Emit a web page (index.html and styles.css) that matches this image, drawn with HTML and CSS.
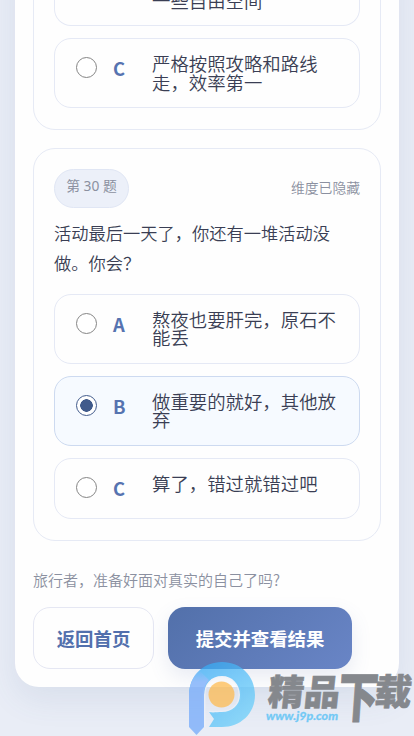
FILE: index.html
```html
<!DOCTYPE html>
<html lang="zh-CN">
<head>
<meta charset="utf-8">
<meta name="viewport" content="width=device-width, initial-scale=1">
<title>测试</title>
<link rel="stylesheet" href="styles.css">
</head>
<body>
<main class="shell">
  <section class="card">
    <div class="option tail"><span class="text">一些自由空间</span></div>
    <div class="option"><span class="radio"></span><b class="key">C</b><span class="text">严格按照攻略和路线走，效率第一</span></div>
  </section>
  <section class="card current">
    <header class="meta"><span class="pill">第 30 题</span><span class="dimension">维度已隐藏</span></header>
    <p class="question">活动最后一天了，你还有一堆活动没做。你会？</p>
    <div class="option"><span class="radio"></span><b class="key">A</b><span class="text">熬夜也要肝完，原石不能丢</span></div>
    <div class="option selected"><span class="radio"></span><b class="key">B</b><span class="text">做重要的就好，其他放弃</span></div>
    <div class="option single"><span class="radio"></span><b class="key">C</b><span class="text">算了，错过就错过吧</span></div>
  </section>
  <p class="hint">旅行者，准备好面对真实的自己了吗?</p>
  <footer class="actions">
    <button class="btn">返回首页</button>
    <button class="btn primary">提交并查看结果</button>
  </footer>
</main>
<svg class="watermark" width="230" height="80" viewBox="184 656 230 80">
  <defs>
    <linearGradient id="ring" x1="0" y1="0" x2="1" y2="1"><stop offset="0" stop-color="#2ea5f5"/><stop offset="1" stop-color="#70d4fb"/></linearGradient>
    <linearGradient id="stem" x1="0" y1="0" x2="0" y2="1"><stop offset="0" stop-color="#70a8fb" stop-opacity="0"/><stop offset=".4" stop-color="#70a8fb"/></linearGradient>
  </defs>
  <path class="halo" d="M204 727V695C204 684 211 676 222 676C232 676 240 684 240 695C240 705 232 712 222 712C217 712 213 713 209 712"/>
  <g opacity=".72">
    <path fill="url(#ring)" d="M189 695C189 676 203 662 222 662C241 662 255 676 255 695C255 714 240 727 222 727H209L214 719L209 712C213 713 217 712 222 712C232 712 240 705 240 695C240 684 232 676 222 676C211 676 204 684 204 695V700H189Z"/>
    <path fill="#70a8fb" d="M189 700H204V727L196.500 735L189 727Z"/>
    <path fill="url(#stem)" d="M189 695C189 686 193 676 199 670L209 680Q204 685 204 695V700H189Z"/>
    <circle cx="221.500" cy="694.500" r="13" fill="#ffba4c"/>
  </g>
  <g class="brand">
    <text transform="translate(267 704.500) skewX(-6) scale(1 .96)" textLength="72" lengthAdjust="spacingAndGlyphs">精品</text>
    <text transform="translate(337 717) skewX(-4) scale(1.080 1.460)">下</text>
    <text transform="translate(373.500 705) skewX(-6) scale(1 .98)">载</text>
  </g>
  <text class="site" x="266" y="720" textLength="72" lengthAdjust="spacingAndGlyphs">www.j9p.com</text>
</svg>
</body>
</html>
```
FILE: styles.css
```css
* { box-sizing: border-box; }
body {
  margin: 0;
  height: 736px;
  overflow: hidden;
  display: flex;
  flex-direction: column;
  justify-content: flex-end;
  padding: 0 15px 49px;
  background: #e9edf6;
  color: #3a3e54;
  font-family: "Noto Sans CJK SC", sans-serif;
  font-weight: 350;
}
.shell {
  flex: none;
  padding: 18px;
  background: #fefefe;
  border-radius: 24px;
  box-shadow: 0 12px 32px rgba(70, 95, 145, .1);
}
.card {
  padding: 20px;
  border: 1px solid #e6eaf5;
  border-radius: 22px;
  margin-bottom: 19px;
}
.card:first-child { padding-bottom: 21px; margin-bottom: 18px; }
.current { padding-bottom: 21px; }
.meta { display: flex; justify-content: space-between; height: 39px; }
.pill {
  width: 75px;
  border: 1px solid #e0e6f4;
  border-radius: 20px;
  background: #ecf0f9;
  color: #8b90a0;
  font: 400 13.8px/31px "Noto Sans", "Noto Sans CJK SC", sans-serif;
  text-align: center;
}
.dimension { color: #8b90a0; font-size: 13.8px; line-height: 36px; }
.question { margin: 10px 0 17px; font-size: 17.25px; line-height: 29.3px; }
.option {
  display: grid;
  grid-template-columns: 21px 23px 1fr;
  column-gap: 16px;
  align-items: start;
  height: 70px;
  padding: 15px 21px;
  border: 1px solid #e5e9f5;
  border-radius: 17px;
}
.option + .option { margin-top: 12px; }
.tail { height: 40px; padding-top: 5px; border-top: 0; border-radius: 0 0 17px 17px; }
.tail .text { grid-column: 3; }
.single { height: 61px; }
.selected { background: #f6faff; border-color: #cddaf0; }
.radio {
  width: 21px;
  height: 21px;
  margin-top: 3px;
  border: 1.500px solid #858585;
  border-radius: 50%;
  background: #fff;
}
.selected .radio {
  border-color: #425b8c;
  background: radial-gradient(circle, #405a8b 0 6px, #fff 6.500px);
}
.key { color: #5673b0; font-size: 18.4px; line-height: 29px; font-weight: 700; }
.text { font-size: 18.4px; line-height: 18.4px; margin-right: -6px; }
.hint { margin: 0 0 16px; color: #8b90a0; font-size: 15px; line-height: 22px; }
.card + .hint { margin-top: 28px; }
.actions { display: flex; gap: 14px; }
.btn {
  width: 121px;
  height: 62px;
  padding: 0;
  border: 1px solid #e5e7f3;
  border-radius: 17px;
  background: #fefefe;
  color: #5270ad;
  font: 700 18.4px "Noto Sans CJK SC", sans-serif;
}
.primary {
  width: 184px;
  border: 0;
  background: linear-gradient(135deg, #5270aa, #6985c6);
  color: #fff;
  box-shadow: 0 8px 20px rgba(82, 112, 170, .13);
}
.watermark { position: absolute; right: 0; bottom: 0; }
.halo { fill: none; stroke: #eef1f8; stroke-width: 3px; opacity: .6; }
.brand {
  fill: #85888d;
  stroke: #85888d;
  stroke-width: .6px;
  font: 900 37px "Noto Sans CJK SC", sans-serif;
}
.site { fill: #72c9f5; stroke: #72c9f5; stroke-width: .3px; font: italic 700 11.5px Lato, sans-serif; }
```
